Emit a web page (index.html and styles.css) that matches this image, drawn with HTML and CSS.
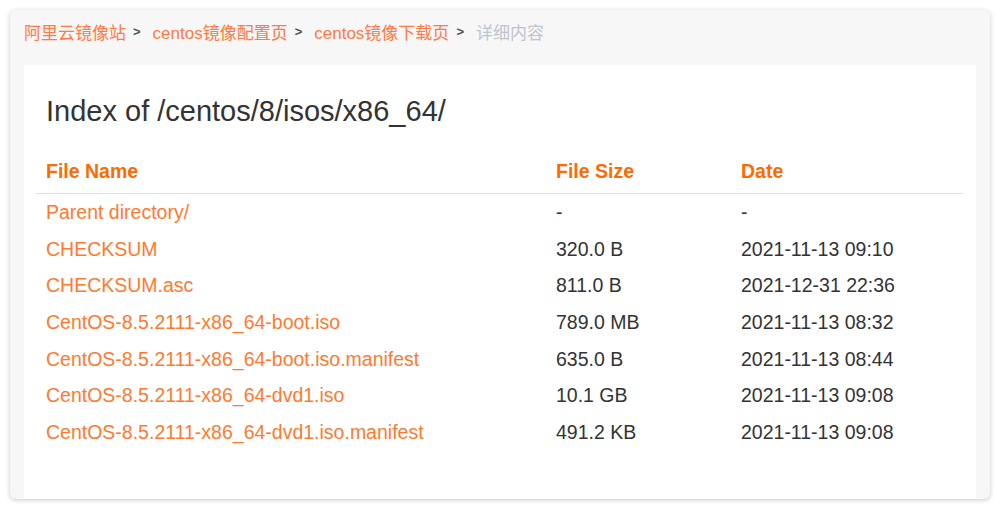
FILE: index.html
```html
<!DOCTYPE html>
<html lang="zh-CN">
    <head>
        <meta charset="UTF-8">
        <meta name="viewport" content="width=device-width, initial-scale=1.0">
        <title>Index of /centos/8/isos/x86_64/</title>
        <link rel="stylesheet" href="styles.css">
    </head>
    <body>
        <div class="card">
            <div class="breadcrumb">
                <a href="#">阿里云镜像站</a>
                <span class="sep">&gt;</span>
                <a href="#">centos镜像配置页</a>
                <span class="sep">&gt;</span>
                <a href="#">centos镜像下载页</a>
                <span class="sep">&gt;</span>
                <span class="current">详细内容</span>
            </div>

            <div class="panel">
                <h1>Index of /centos/8/isos/x86_64/</h1>
                <table class="listing">
                    <thead>
                        <tr>
                            <th class="col-name">File Name</th>
                            <th class="col-size">File Size</th>
                            <th class="col-date">Date</th>
                        </tr>
                    </thead>
                    <tbody>
                        <tr>
                            <td><a href="#">Parent directory/</a></td>
                            <td>-</td>
                            <td>-</td>
                        </tr>
                        <tr>
                            <td><a href="#">CHECKSUM</a></td>
                            <td>320.0 B</td>
                            <td>2021-11-13 09:10</td>
                        </tr>
                        <tr>
                            <td><a href="#">CHECKSUM.asc</a></td>
                            <td>811.0 B</td>
                            <td>2021-12-31 22:36</td>
                        </tr>
                        <tr>
                            <td><a href="#">CentOS-8.5.2111-x86_64-boot.iso</a></td>
                            <td>789.0 MB</td>
                            <td>2021-11-13 08:32</td>
                        </tr>
                        <tr>
                            <td><a href="#">CentOS-8.5.2111-x86_64-boot.iso.manifest</a></td>
                            <td>635.0 B</td>
                            <td>2021-11-13 08:44</td>
                        </tr>
                        <tr>
                            <td><a href="#">CentOS-8.5.2111-x86_64-dvd1.iso</a></td>
                            <td>10.1 GB</td>
                            <td>2021-11-13 09:08</td>
                        </tr>
                        <tr>
                            <td><a href="#">CentOS-8.5.2111-x86_64-dvd1.iso.manifest</a></td>
                            <td>491.2 KB</td>
                            <td>2021-11-13 09:08</td>
                        </tr>
                    </tbody>
                </table>
            </div>
        </div>
    </body>
</html>
```

FILE: styles.css
```css
html, body {
    height: 100%;
}

body {
    margin: 0;
    padding: 10px;
    box-sizing: border-box;
    background-color: #ffffff;
    font-family: "Liberation Sans", Arial, "Noto Sans CJK SC", sans-serif;
    color: #333333;
}

a {
    text-decoration: none;
}

.card {
    height: 100%;
    background-color: #f7f7f7;
    border-radius: 6px;
    box-shadow: 0 1px 5px rgba(0, 0, 0, 0.22);
    padding: 0 14px;
    box-sizing: border-box;
    display: flex;
    flex-direction: column;
    overflow: hidden;
}

.breadcrumb {
    height: 55px;
    display: flex;
    align-items: center;
    font-size: 17px;
    padding-bottom: 12px;
    box-sizing: border-box;
}

.breadcrumb a {
    color: #ff7a45;
}

.breadcrumb .sep {
    color: #4a4f57;
    font-size: 13px;
    font-weight: bold;
    padding: 0 7px;
    margin-right: 5px;
}

.breadcrumb .current {
    color: #c0c4cc;
}

.panel {
    flex: 1;
    background-color: #ffffff;
    padding: 30px 13px 0 12px;
}

h1 {
    margin: 0 0 22px 10px;
    font-size: 29px;
    font-weight: normal;
    line-height: 32px;
    color: #333333;
}

.listing {
    width: 100%;
    border-collapse: collapse;
    font-size: 19.5px;
}

.listing th {
    text-align: left;
    color: #ff6a00;
    font-weight: bold;
    height: 44px;
    padding: 0 0 0 10px;
    border-bottom: 1px solid #e0e0e0;
    vertical-align: middle;
}

.listing td {
    height: 36.7px;
    padding: 0 0 0 10px;
    vertical-align: middle;
    color: #333333;
}

.listing td a {
    color: #ff7a2e;
}

.col-name {
    width: 500px;
}

.col-size {
    width: 175px;
}
```
